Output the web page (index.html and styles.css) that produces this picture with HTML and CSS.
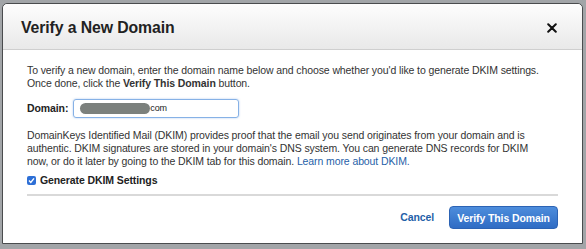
FILE: index.html
```html
<!doctype html>
<html lang="en">
  <head>
    <meta charset="UTF-8" />
    <title>Verify a New Domain</title>
    <link rel="stylesheet" href="styles.css">
  </head>
  <body>
    <div class="modal">
      <header class="modal-header">
        <h1>Verify a New Domain</h1>
        <button class="close-btn" aria-label="Close">
          <svg width="10" height="10" viewBox="0 0 10 10">
            <path d="M1.2 1.2 L8.8 8.8 M8.8 1.2 L1.2 8.8" stroke="#111" stroke-width="2" stroke-linecap="round" />
          </svg>
        </button>
      </header>

      <div class="modal-body">
        <p class="intro">
          To verify a new domain, enter the domain name below and choose whether you'd like to generate DKIM settings.<br>
          Once done, click the <b>Verify This Domain</b> button.
        </p>

        <div class="domain-row">
          <label for="domain">Domain:</label>
          <div class="domain-input" id="domain">
            <span class="redacted"></span><span class="tld">com</span>
          </div>
        </div>

        <p class="dkim-info">
          DomainKeys Identified Mail (DKIM) provides proof that the email you send originates from your domain and is<br>
          authentic. DKIM signatures are stored in your domain's DNS system. You can generate DNS records for DKIM<br>
          now, or do it later by going to the DKIM tab for this domain. <a href="#">Learn more about DKIM.</a>
        </p>

        <label class="check-row">
          <span class="checkbox">
            <svg width="7" height="7" viewBox="0 0 7 7">
              <path d="M1 3.6 L2.8 5.4 L6 1.4" stroke="#fff" stroke-width="1.4" fill="none" />
            </svg>
          </span>
          Generate DKIM Settings
        </label>
      </div>

      <footer class="modal-footer">
        <a href="#" class="cancel">Cancel</a>
        <button class="btn-primary">Verify This Domain</button>
      </footer>
    </div>
  </body>
</html>
```

FILE: styles.css
```css
* {
  margin: 0;
  padding: 0;
  box-sizing: border-box;
}

body {
  font-family: "Liberation Sans", Arial, sans-serif;
  background-color: #a2a5a8;
  color: #333;
  font-size: 10.5px;
  letter-spacing: -0.1px;
  line-height: 13px;
  padding: 3px 3px 0 2px;
  height: 249px;
  overflow: hidden;
}

.modal {
  background-color: #fff;
  border: 1px solid #4a4c4e;
  border-radius: 5px 5px 0 0;
  height: 241px;
  display: flex;
  flex-direction: column;
}

.modal-header {
  height: 46px;
  display: flex;
  align-items: center;
  justify-content: space-between;
  padding: 0 25px 0 18px;
  background: linear-gradient(#fdfdfd, #e9e9e9);
  border-bottom: 1px solid #cfcfcf;
  border-radius: 5px 5px 0 0;
}

.modal-header h1 {
  font-size: 15.8px;
  letter-spacing: -0.1px;
  font-weight: 700;
  color: #222;
  padding-top: 1px;
}

.close-btn {
  border: none;
  background: none;
  display: flex;
  margin-top: 2px;
}

.modal-body {
  padding: 14px 24px 0 24px;
}

.intro {
  margin-bottom: 9px;
}

.domain-row {
  display: flex;
  align-items: center;
  gap: 5px;
  margin-bottom: 11px;
}

.domain-row label {
  font-weight: 700;
  color: #222;
}

.domain-input {
  width: 166px;
  height: 19px;
  border: 1px solid #86b1e6;
  border-radius: 3px;
  box-shadow: 0 0 2px rgba(80, 140, 220, 0.5);
  display: flex;
  align-items: center;
  padding-left: 6px;
  font-size: 9px;
}

.redacted {
  width: 70px;
  height: 11px;
  border-radius: 6px;
  background-color: #7b807d;
}

.tld {
  color: #222;
}

.dkim-info {
  margin-bottom: 6px;
}

.dkim-info a {
  color: #1f5fa8;
  text-decoration: none;
}

.check-row {
  display: flex;
  align-items: center;
  gap: 4px;
  font-weight: 700;
  color: #222;
}

.checkbox {
  width: 9px;
  height: 9px;
  border-radius: 2px;
  background-color: #2d6fd6;
  display: flex;
  align-items: center;
  justify-content: center;
}

.modal-footer {
  margin: 7px 24px 0 24px;
  border-top: 2px solid #d9d9d9;
  display: flex;
  justify-content: flex-end;
  align-items: center;
  gap: 15px;
  padding-top: 10px;
}

.cancel {
  color: #1f5fa8;
  font-weight: 700;
  text-decoration: none;
}

.btn-primary {
  font-family: inherit;
  font-size: 10.5px;
  letter-spacing: -0.1px;
  font-weight: 700;
  color: #fff;
  height: 23px;
  width: 109px;
  border: 1px solid #2c63b4;
  border-radius: 4px;
  background: linear-gradient(#4d8ddc, #2f6cc4);
}
```
